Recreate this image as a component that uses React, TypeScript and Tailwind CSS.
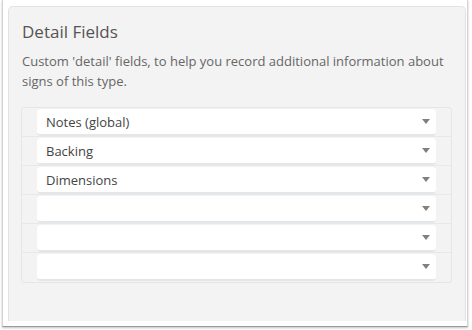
import React from "react";

const fields = ["Notes (global)", "Backing", "Dimensions", "", "", ""];

const FieldRow: React.FC<{ value: string; last: boolean }> = ({ value, last }) => {
  return (
    <div className={`flex h-[29px] ${last ? "" : "border-b border-[#e6e8ea]"}`}>
      <div className="w-[15px] shrink-0" />
      {/* select */}
      <div className="flex-1 mt-[1px] h-[27px] bg-white rounded-[4px] border-b-2 border-[#e3e7ea] flex items-center pl-[9px] pr-[6px]">
        <span className="flex-1 text-[13px] text-[#444] leading-none pt-[1px]">{value}</span>
        <span className="w-0 h-0 border-l-[4px] border-r-[4px] border-t-[5px] border-l-transparent border-r-transparent border-t-[#808080]" />
      </div>
      <div className="w-[15px] shrink-0" />
    </div>
  );
};

export default function App() {
  return (
    <div className="w-[472px] h-[330px] bg-white" style={{ fontFamily: "'Open Sans', sans-serif" }}>
      <div className="ml-[2px] w-[466px] h-[327px] border-l border-r border-[#d4d4d4] border-b border-b-[#9c9c9c] shadow-[0_1px_2px_rgba(0,0,0,0.25)] pl-[5px] pr-[1px] pt-[6px] pb-[5px] bg-white">
        <div className="h-full bg-[#f3f3f3] border border-b-0 border-[#e2e2e2] rounded-t-[5px] pl-[13px] pr-[10px] pt-[15px]">
          <h2 className="text-[17px] leading-[20px] text-[#555] mb-[9px]">Detail Fields</h2>
          <p className="text-[13px] leading-[20px] text-[#666]">
            Custom 'detail' fields, to help you record additional information about signs of this type.
          </p>

          {/* fields table */}
          <div className="mt-[16px] w-[431px] -ml-[1px] border border-[#e6e6e6] rounded-[3px]">
            {fields.map((f, i) => (
              <FieldRow key={i} value={f} last={i === fields.length - 1} />
            ))}
          </div>
        </div>
      </div>
    </div>
  );
}
